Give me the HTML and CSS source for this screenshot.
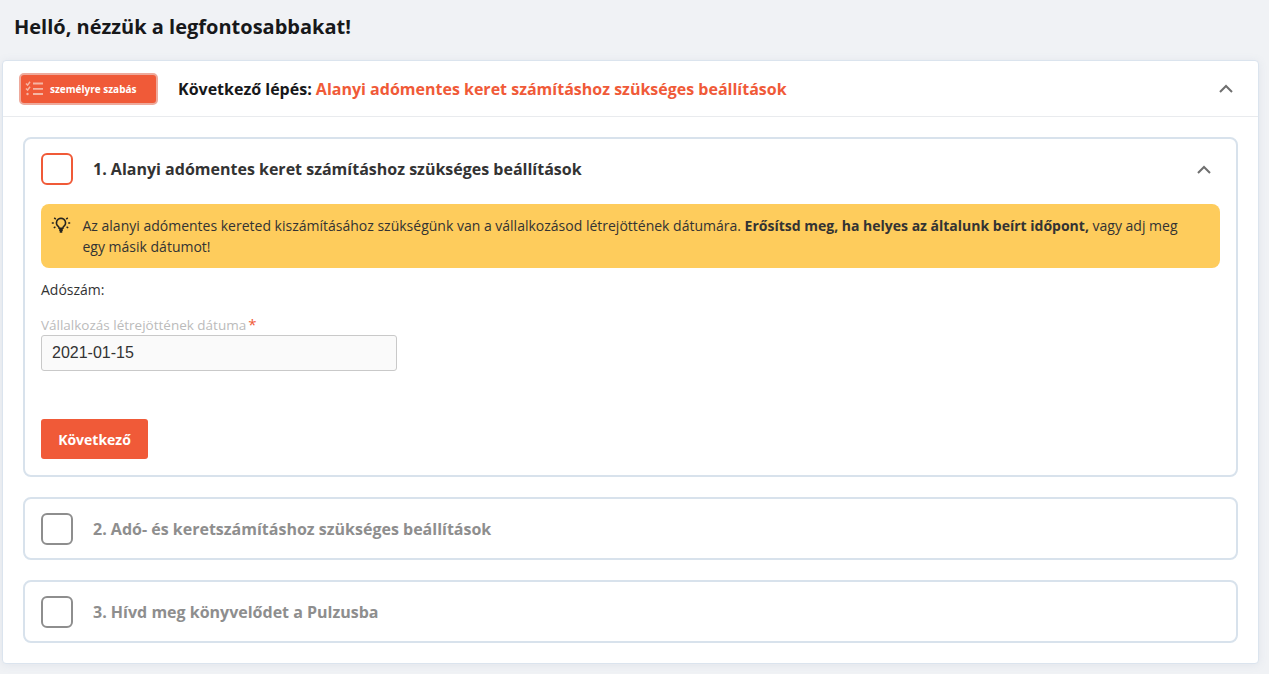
FILE: index.html
```html
<!DOCTYPE html>
<html lang="hu">
<head>
<meta charset="utf-8">
<title>Helló</title>
<link rel="stylesheet" href="styles.css">
</head>
<body>
<h1 class="page-title">Helló, nézzük a legfontosabbakat!</h1>
<main class="main-card">
  <header class="main-head">
    <div class="badge">
      <svg class="badge-icon" width="20" height="16" viewBox="0 0 20 16" fill="none" stroke="#f5b5a3" stroke-width="1.5">
        <path d="M1 2.5l1.6 1.6L5 .8M1 7.5l1.6 1.6L5 5.8"/>
        <circle cx="2.5" cy="13" r="1.2" fill="#f5b5a3" stroke="none"/>
        <path d="M8 2.5h10M8 7.8h10M8 13h10" stroke-width="1.8"/>
      </svg>
      <span>személyre szabás</span>
    </div>
    <div class="next-step">Következő lépés: <span class="accent">Alanyi adómentes keret számításhoz szükséges beállítások</span></div>
    <svg class="chevron" width="14" height="9" viewBox="0 0 14 9" fill="none" stroke="#6f6f6f" stroke-width="2"><path d="M1 8l6-6 6 6"/></svg>
  </header>
  <div class="main-body">
    <section class="step">
      <div class="step-head">
        <span class="check check-active"></span>
        <h2 class="step-title">1. Alanyi adómentes keret számításhoz szükséges beállítások</h2>
        <svg class="chevron" width="14" height="9" viewBox="0 0 14 9" fill="none" stroke="#6f6f6f" stroke-width="2"><path d="M1 8l6-6 6 6"/></svg>
      </div>
      <div class="step-body">
        <div class="alert">
          <svg class="bulb" width="20" height="20" viewBox="0 0 20 20" fill="none" stroke="#26241f" stroke-width="1.5">
            <path d="M10 3.2a4.6 4.6 0 0 0-2.8 8.2c.6.5.9 1.1.9 1.9h3.8c0-.8.3-1.4.9-1.9A4.6 4.6 0 0 0 10 3.2z"/>
            <path d="M8.2 15h3.6M8.7 16.8h2.6" stroke-width="1.8"/>
            <path d="M3.2 2.9l1.6 1.2M16.8 2.9l-1.6 1.2M.8 8h2M17.2 8h2M2.8 12.8l1.6-1M17.2 12.8l-1.6-1"/>
          </svg>
          <p class="alert-text">Az alanyi adómentes kereted kiszámításához szükségünk van a vállalkozásod létrejöttének dátumára. <strong>Erősítsd meg, ha helyes az általunk beírt időpont,</strong> vagy adj meg egy másik dátumot!</p>
        </div>
        <p class="tax">Adószám:</p>
        <label class="field-label" for="d">Vállalkozás létrejöttének dátuma<span class="req">*</span></label>
        <input class="field" id="d" type="text" value="2021-01-15">
        <button class="btn" type="button">Következő</button>
      </div>
    </section>
    <section class="step step-off">
      <div class="step-head">
        <span class="check"></span>
        <h2 class="step-title">2. Adó- és keretszámításhoz szükséges beállítások</h2>
      </div>
    </section>
    <section class="step step-off">
      <div class="step-head">
        <span class="check"></span>
        <h2 class="step-title">3. Hívd meg könyvelődet a Pulzusba</h2>
      </div>
    </section>
  </div>
</main>
</body>
</html>
```

FILE: styles.css
```css
* { box-sizing: border-box; }
html, body { height: 100%; }
body {
  margin: 0;
  padding: 0 10px 0 2px;
  background: #f0f2f5;
  font-family: "Open Sans", sans-serif;
  color: #333;
  overflow: hidden;
}
.page-title {
  margin: 0;
  padding: 13px 0 0 12px;
  height: 60px;
  font-size: 20px;
  line-height: 27px;
  font-weight: 700;
  color: #17181a;
}
.main-card {
  height: 604px;
  background: #fff;
  border: 1px solid #dbe4ee;
  border-radius: 4px;
  box-shadow: 0 1px 8px rgba(120, 140, 170, .12);
}
.main-head {
  display: flex;
  align-items: center;
  height: 56px;
  padding: 0 25px 0 16px;
  border-bottom: 1px solid #e9ebee;
}
.badge {
  display: flex;
  align-items: center;
  width: 139px;
  height: 32px;
  padding-left: 4px;
  gap: 5px;
  background: #f05a38;
  border: 2px solid #eeaa9c;
  border-radius: 5px;
  color: #fff;
  font-size: 10px;
  font-weight: 700;
}
.next-step {
  flex: 1;
  margin-left: 20px;
  padding-top: 1px;
  font-size: 16px;
  font-weight: 700;
  color: #17181a;
}
.accent { color: #f05a38; }
.main-body {
  display: flex;
  flex-direction: column;
  gap: 20px;
  padding: 20px 20px 0;
}
.step {
  border: 2px solid #d8e2ec;
  border-radius: 8px;
}
.step-head {
  display: flex;
  align-items: center;
  height: 59px;
  padding: 1px 25px 0 16px;
}
.check {
  flex: none;
  width: 32px;
  height: 32px;
  border: 2px solid #8e8e8e;
  border-radius: 6px;
}
.check-active { border-color: #f05a38; }
.step-title {
  flex: 1;
  margin: 0 0 0 20px;
  font-size: 16px;
  font-weight: 700;
  color: #333;
}
.step-off .step-title { color: #8e8e8e; }
.step-body {
  padding: 6px 16px 16px;
}
.alert {
  display: flex;
  height: 64px;
  padding: 11px 24px 0 10px;
  gap: 11.5px;
  background: #fecc5c;
  border-radius: 8px;
}
.bulb { flex: none; }
.alert-text {
  margin: 0;
  font-size: 14px;
  line-height: 21px;
  color: #333;
}
.alert-text strong { font-weight: 700; }
.tax {
  margin: 12px 0 0;
  font-size: 14px;
  line-height: 19px;
  color: #333;
}
.field-label {
  display: block;
  margin-top: 17px;
  font-size: 13.5px;
  line-height: 18px;
  color: #bbb;
}
.req {
  margin-left: 2px;
  font-size: 15px;
  line-height: 1;
  color: #f05a38;
}
.field {
  display: block;
  width: 356px;
  height: 36px;
  margin-top: 1px;
  padding: 0 10px;
  background: #fafafa;
  border: 1px solid #c9c9c9;
  border-radius: 3px;
  font-family: "Liberation Sans", sans-serif;
  font-size: 16px;
  color: #333;
}
.btn {
  display: block;
  width: 107px;
  height: 40px;
  margin-top: 48px;
  padding: 0;
  background: #f05a38;
  border: 0;
  border-radius: 3px;
  color: #fff;
  font-family: "Open Sans", sans-serif;
  font-size: 14px;
  font-weight: 700;
}
```
